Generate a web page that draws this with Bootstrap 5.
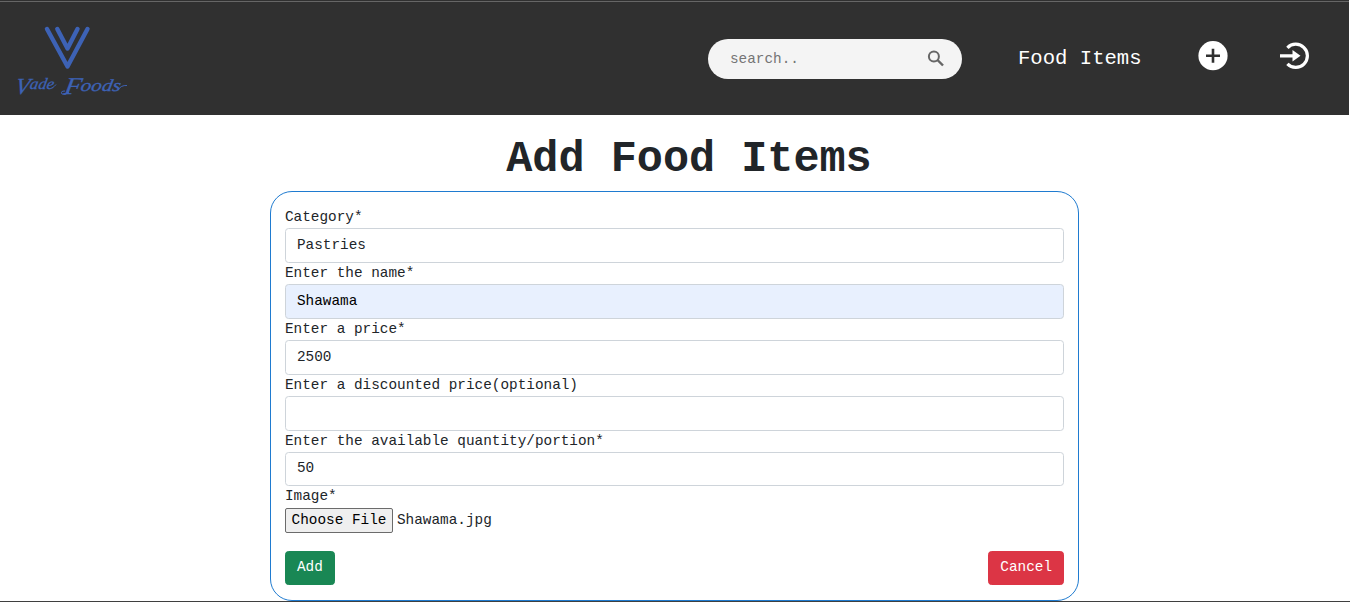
<!DOCTYPE html>
<html lang="en">
<head>
<meta charset="utf-8">
<meta name="viewport" content="width=device-width, initial-scale=1">
<title>Vade Foods - Add Food Items</title>
<link href="https://cdn.jsdelivr.net/npm/bootstrap@5.3.0/dist/css/bootstrap.min.css" rel="stylesheet">
<style>
body{font-family:"Courier New","Liberation Mono",monospace;font-size:14.36px;line-height:21.5px;height:602px;overflow:hidden;border-bottom:1px solid #3f3f3f;color:#212529}
.site-nav{background:#303030;height:115px;margin-right:1px;border-top:1px solid #303030;box-shadow:inset 0 1px #666;padding:2px 39px 0 10px}
.search-box{width:254px;height:40px;background:#f4f4f4;margin-right:56px;padding:0 17px 0 22px}
.search-box input{font-size:14.36px;line-height:20px;color:#757575;outline:0;min-width:0}
.search-box input::placeholder{color:#757575;opacity:1}
.nav-item-link{font-size:20.6px;line-height:30px;width:124px;margin-right:56px;white-space:nowrap}
.nav-icon{margin-top:-6px}
.add-icon{margin-right:52px}
.page-title{font-size:43.5px;line-height:52px;font-weight:700;margin:19px 0 5px;padding-left:28px}
.food-form{width:809px;height:410px;border:1px solid #1f7bd0;border-radius:22px;padding:15px 14px 0;margin-left:270px}
.food-form label{display:block;height:21px}
.food-form .form-control{height:35px;font-size:14.36px;line-height:21px;padding:4px 11px 6px;border-color:#ced4da;border-radius:3.6px;color:#212529}
.food-form .form-control.filled{background:#e8f0fe;color:#000}
.food-form .form-control.short{height:34px}
.file-row{height:20px;margin-top:4px}
.file-btn{height:25px;width:108px;background:#efefef;border:1px solid #6b6b6b;border-radius:2px;padding:0;color:#000;line-height:22px;position:relative;top:-1px}
.food-form .btn{height:34px;font-size:14.36px;line-height:20px;padding:5px 11px 7px;border-radius:3.6px}
</style>
</head>
<body class="bg-white">
<nav class="site-nav d-flex align-items-center">
  <a href="#" class="me-auto" aria-label="Vade Foods">
    <svg class="d-block overflow-visible" width="124" height="84" viewBox="10 18 124 84">
      <g fill="none" stroke="#3d62b5" stroke-width="4.4" stroke-linecap="round" stroke-linejoin="round">
        <path d="M47 30L67.5 67.5L87.5 30"/><path d="M57.3 30L67.5 49.5L77.5 30"/>
      </g>
      <g fill="#3d62b5" stroke="#3d62b5" stroke-width=".3" font-family="'Liberation Serif',serif" font-style="italic" transform="translate(0 92) skewX(-10) translate(0 -92)">
        <text x="15" y="95" font-size="23" textLength="14" lengthAdjust="spacingAndGlyphs">V</text>
        <text x="29" y="90" font-size="16" textLength="24" lengthAdjust="spacingAndGlyphs">ade</text>
        <text x="64" y="95" font-size="24" textLength="17" lengthAdjust="spacingAndGlyphs">F</text>
        <text x="80" y="92" font-size="17" textLength="40" lengthAdjust="spacingAndGlyphs">oods</text>
      </g>
      <path d="M118 91Q121 86 127 86.5M52 89Q54 88 56 85.5M65 92Q60 92 62 95Q65 97 69 93" fill="none" stroke="#3d62b5"/>
    </svg>
  </a>
  <form class="search-box rounded-pill d-flex align-items-center">
    <input class="border-0 bg-transparent p-0 flex-grow-1" type="text" placeholder="search..">
    <svg width="18" height="18" viewBox="0 0 18 18" fill="none" stroke="#666"><circle cx="6.9" cy="6.4" r="5" stroke-width="2"/><path d="M10.5 10L16 15.5" stroke-width="2.4"/></svg>
  </form>
  <a href="#" class="nav-item-link text-white text-decoration-none">Food Items</a>
  <a href="#" class="nav-icon add-icon d-flex" aria-label="Add">
    <svg width="30" height="30" viewBox="0 0 30 30"><circle cx="15" cy="14.7" r="14.6" fill="#fff"/><path d="M8 14.7H22M15 7.7V21.7" stroke="#303030" stroke-width="2.6"/></svg>
  </a>
  <a href="#" class="nav-icon d-flex" aria-label="Log out">
    <svg width="30" height="28" viewBox="0 0 30 28"><path d="M7.4 5.8A11.6 11.6 0 1 1 7.4 21.8" fill="none" stroke="#fff" stroke-width="3.2"/><path d="M-.5 12.2H12.5V8L20.5 13.8L12.5 19.6V15.6H-.5Z" fill="#fff"/></svg>
  </a>
</nav>
<main>
  <h1 class="page-title text-center">Add Food Items</h1>
  <form class="food-form">
    <label for="category">Category*</label>
    <input id="category" class="form-control" value="Pastries">
    <label for="name">Enter the name*</label>
    <input id="name" class="form-control filled" value="Shawama">
    <label for="price">Enter a price*</label>
    <input id="price" class="form-control" value="2500">
    <label for="discount">Enter a discounted price(optional)</label>
    <input id="discount" class="form-control">
    <label for="quantity">Enter the available quantity/portion*</label>
    <input id="quantity" class="form-control short" value="50">
    <label>Image*</label>
    <div class="file-row d-flex align-items-center gap-1">
      <button type="button" class="file-btn flex-shrink-0">Choose File</button><span>Shawama.jpg</span>
    </div>
    <div class="d-flex justify-content-between mt-3 pt-1">
      <button type="button" class="btn btn-success">Add</button>
      <button type="button" class="btn btn-danger">Cancel</button>
    </div>
  </form>
</main>
<script src="https://cdn.jsdelivr.net/npm/bootstrap@5.3.0/dist/js/bootstrap.bundle.min.js"></script>
</body>
</html>
